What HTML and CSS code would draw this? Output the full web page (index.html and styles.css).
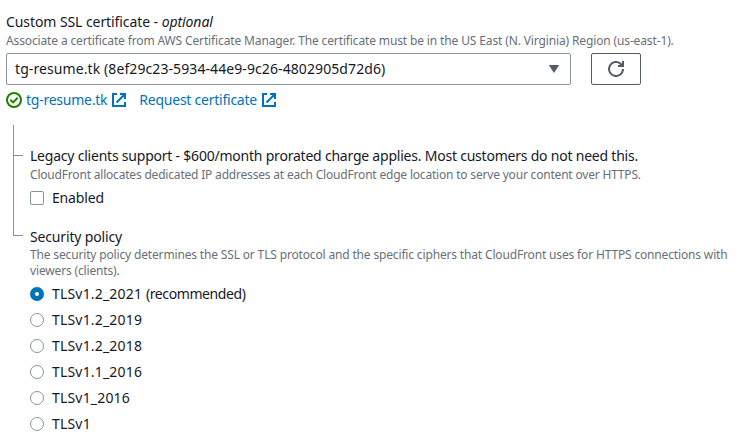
FILE: index.html
```html
<!DOCTYPE html>
<html lang="en">
<head>
<meta charset="utf-8">
<title>Custom SSL certificate</title>
<link rel="stylesheet" href="styles.css">
</head>
<body>
<main class="form">
  <div class="label"><span class="t-ssl">Custom SSL certificate - <em>optional</em></span></div>
  <div class="hint"><span class="t-assoc">Associate a certificate from AWS Certificate Manager. The certificate must be in the US East (N. Virginia) Region (us-east-1).</span></div>
  <div class="controls">
    <div class="select" role="combobox" tabindex="0">
      <span class="t-value">tg-resume.tk (8ef29c23-5934-44e9-9c26-4802905d72d6)</span>
      <svg class="caret" width="12" height="8" viewBox="0 0 12 8"><path d="M.8 0h10.4L6 8z" fill="#545b64"/></svg>
    </div>
    <button class="refresh" aria-label="Refresh">
      <svg width="18" height="18" viewBox="0 0 18 18" fill="none" stroke="#545b64" stroke-width="2"><path d="M16 9A7 7 0 1 1 13.6 3.7L15.4 5.6"/><path d="M16 1v5h-5"/></svg>
    </button>
  </div>
  <div class="links">
    <svg class="status" width="16" height="16" viewBox="0 0 16 16" fill="none" stroke="#1d8102" stroke-width="2"><circle cx="8" cy="8" r="7"/><path d="M4.3 7.8l2.8 2.6 4.6-4.6"/></svg>
    <a class="link"><span class="t-link">tg-resume.tk</span><svg width="14" height="14" viewBox="0 0 14 14" fill="none" stroke="#0073bb" stroke-width="2"><path d="M5 1H1v12h12V9M8 1h5v5M13 1L4.5 9.5"/></svg></a>
    <a class="link"><span class="t-link">Request certificate</span><svg width="14" height="14" viewBox="0 0 14 14" fill="none" stroke="#0073bb" stroke-width="2"><path d="M5 1H1v12h12V9M8 1h5v5M13 1L4.5 9.5"/></svg></a>
  </div>
  <div class="tree">
    <div class="rail"><i class="branch"></i><i class="branch"></i></div>
    <div class="nested">
      <section class="legacy">
        <div class="label"><span class="t-legacy">Legacy clients support - $600/month prorated charge applies. Most customers do not need this.</span></div>
        <div class="hint"><span class="t-cf">CloudFront allocates dedicated IP addresses at each CloudFront edge location to serve your content over HTTPS.</span></div>
        <div class="option check"><i class="box"></i><span class="t-short">Enabled</span></div>
      </section>
      <section class="policy">
        <div class="label"><span class="t-short">Security policy</span></div>
        <div class="hint"><span class="t-pol">The security policy determines the SSL or TLS protocol and the specific ciphers that CloudFront uses for HTTPS connections with<br>viewers (clients).</span></div>
        <div class="radios">
          <div class="option"><i class="radio on"></i><span class="t-tls">TLSv1.2_2021 <span class="t-rec">(recommended)</span></span></div>
          <div class="option"><i class="radio"></i><span class="t-tls">TLSv1.2_2019</span></div>
          <div class="option"><i class="radio"></i><span class="t-tls">TLSv1.2_2018</span></div>
          <div class="option"><i class="radio"></i><span class="t-tls">TLSv1.1_2016</span></div>
          <div class="option"><i class="radio"></i><span class="t-tls">TLSv1_2016</span></div>
          <div class="option"><i class="radio"></i><span class="t-tls">TLSv1</span></div>
        </div>
      </section>
    </div>
  </div>
</main>
</body>
</html>
```
FILE: styles.css
```css
* { box-sizing: border-box; }
body {
  margin: 0;
  background: #fff;
  color: #16191f;
  font: 14px/22px "Noto Sans", "Open Sans", sans-serif;
  white-space: nowrap;
  overflow: hidden;
}
.form { padding: 11px 0 0 6px; }
.label, .option { height: 22px; }
.hint { color: #687078; font-size: 12px; line-height: 16px; }
.controls { display: flex; gap: 20px; margin-top: 4px; }
.select {
  width: 565px;
  height: 32px;
  padding: 0 10px 0 8px;
  border: 1px solid #879596;
  border-radius: 2px;
  display: flex;
  align-items: center;
  justify-content: space-between;
}
.refresh {
  width: 50px;
  height: 32px;
  padding: 0;
  border: 1px solid #545b64;
  border-radius: 2px;
  background: #fff;
  display: flex;
  align-items: center;
  justify-content: center;
}
.links { display: flex; align-items: center; height: 22px; margin-top: 4px; color: #0073bb; }
.status { margin-right: 4px; }
.link { display: flex; align-items: center; gap: 5px; margin-right: 13px; }
.tree { display: flex; margin-top: 14px; padding-left: 7px; }
.rail {
  flex: none;
  width: 10px;
  height: 111px;
  margin-right: 7px;
  border-left: 1px solid #879596;
  display: flex;
  flex-direction: column;
  justify-content: space-between;
  padding-top: 30px;
}
.branch { height: 1px; background: #879596; }
.nested { padding-top: 20px; }
.option { display: flex; align-items: center; gap: 8px; }
.check { margin-top: 4px; }
.policy { margin-top: 17px; }
.policy .label { height: 21px; }
.box, .radio { flex: none; width: 14px; height: 14px; border: 1px solid #879596; }
.box { border-radius: 2px; }
.radio { border-radius: 50%; }
.radio.on { border: 5px solid #0073bb; }
.radios { display: grid; gap: 4px; margin-top: 4px; }

.t-ssl { letter-spacing: -.08px; }
.t-assoc { letter-spacing: -.134px; }
.t-value { letter-spacing: .09px; }
.t-link { letter-spacing: -.24px; }
.t-legacy { letter-spacing: -.218px; }
.t-cf { letter-spacing: -.192px; }
.t-short { letter-spacing: -.16px; }
.t-pol { letter-spacing: -.158px; }
.t-tls { letter-spacing: .18px; }
.t-rec { letter-spacing: -.4px; }
```
